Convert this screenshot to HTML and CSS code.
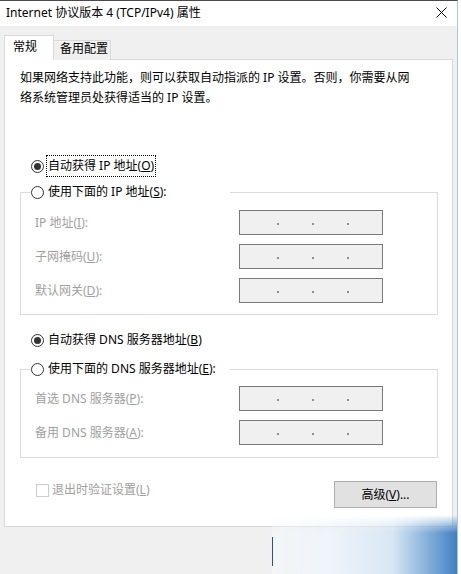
FILE: index.html
```html
<!DOCTYPE html>
<html lang="zh-CN">

<head>
    <meta charset="UTF-8">
    <meta name="viewport" content="width=device-width, initial-scale=1.0">
    <title>Internet 协议版本 4 (TCP/IPv4) 属性</title>
    <link rel="stylesheet" href="styles.css">
</head>

<body>
    <div class="window">
        <div class="titlebar">
            <span class="title">Internet 协议版本 4 (TCP/IPv4) 属性</span>
            <svg class="close" width="11" height="11" viewBox="0 0 11 11">
                <path d="M0.5 0.5 L10.5 10.5 M10.5 0.5 L0.5 10.5" stroke="#000" stroke-width="1" fill="none" />
            </svg>
        </div>

        <div class="client">
            <div class="tabs">
                <div class="tab active">常规</div>
                <div class="tab">备用配置</div>
            </div>

            <div class="panel">
                <p class="desc">如果网络支持此功能，则可以获取自动指派的 IP 设置。否则，你需要从网<br>络系统管理员处获得适当的 IP 设置。</p>

                <div class="radio-row first">
                    <span class="radio checked"></span>
                    <span class="radio-label focus">自动获得 IP 地址(<u>O</u>)</span>
                </div>

                <fieldset class="group">
                    <legend>
                        <span class="radio"></span>
                        <span class="radio-label">使用下面的 IP 地址(<u>S</u>):</span>
                    </legend>
                    <div class="field">
                        <span class="field-label">IP 地址(<u>I</u>):</span>
                        <span class="ipbox"><i></i><i></i><i></i></span>
                    </div>
                    <div class="field">
                        <span class="field-label">子网掩码(<u>U</u>):</span>
                        <span class="ipbox"><i></i><i></i><i></i></span>
                    </div>
                    <div class="field">
                        <span class="field-label">默认网关(<u>D</u>):</span>
                        <span class="ipbox"><i></i><i></i><i></i></span>
                    </div>
                </fieldset>

                <div class="radio-row dns">
                    <span class="radio checked"></span>
                    <span class="radio-label">自动获得 DNS 服务器地址(<u>B</u>)</span>
                </div>

                <fieldset class="group group-dns">
                    <legend>
                        <span class="radio"></span>
                        <span class="radio-label">使用下面的 DNS 服务器地址(<u>E</u>):</span>
                    </legend>
                    <div class="field">
                        <span class="field-label">首选 DNS 服务器(<u>P</u>):</span>
                        <span class="ipbox"><i></i><i></i><i></i></span>
                    </div>
                    <div class="field">
                        <span class="field-label">备用 DNS 服务器(<u>A</u>):</span>
                        <span class="ipbox"><i></i><i></i><i></i></span>
                    </div>
                </fieldset>

                <div class="footer">
                    <label class="check">
                        <span class="checkbox"></span>
                        <span class="check-label">退出时验证设置(<u>L</u>)</span>
                    </label>
                    <button class="btn">高级(<u>V</u>)...</button>
                </div>
            </div>
        </div>

        <div class="watermark"></div>
        <div class="caret"></div>
    </div>
</body>

</html>
```

FILE: styles.css
```css
html,
body {
    margin: 0;
    padding: 0;
}

:root {
    --face: #f0f0f0;
    --line: #d9d9d9;
    --disabled: #a0a0a0;
}

body {
    width: 461px;
    height: 574px;
    overflow: hidden;
    background: #fff;
    color: #000;
    font-family: "Noto Sans", "Noto Sans CJK SC", sans-serif;
    font-size: 12px;
    line-height: 20px;
}

.window {
    position: relative;
    width: 458px;
    height: 574px;
    box-sizing: border-box;
    border-top: 1px solid #4a4a4a;
    border-right: 1px solid #a9c6e4;
    background: var(--face);
}

.titlebar {
    height: 25px;
    box-sizing: border-box;
    display: flex;
    justify-content: space-between;
    align-items: flex-start;
    padding: 2px 10px 0 6px;
    background: #fff;
}

.titlebar .title {
    line-height: 20px;
}

.titlebar .close {
    margin-top: 4px;
}

.client {
    padding-top: 9px;
}

.tabs {
    display: flex;
    align-items: flex-end;
    margin: 0 0 -1px 4px;
}

.tab {
    height: 20px;
    box-sizing: border-box;
    width: 58px;
    margin-left: -1px;
    padding: 0 0 0 6px;
    line-height: 16px;
    border: 1px solid var(--line);
    border-bottom: none;
    background: var(--face);
}

.tab.active {
    position: relative;
    z-index: 1;
    height: 25px;
    width: 50px;
    margin-left: 0;
    padding: 3px 0 0 8px;
    background: #fff;
}

.panel {
    width: 449px;
    margin-left: 4px;
    box-sizing: border-box;
    padding: 8px 0 18px;
    border: 1px solid var(--line);
    background: #fff;
}

.desc {
    margin: 0;
    padding-left: 15px;
    line-height: 20px;
}

.radio-row {
    display: flex;
    align-items: center;
    height: 22px;
    padding-left: 26px;
}

.radio-row.first {
    margin-top: 47px;
}

.radio-row.dns {
    margin-top: 14px;
}

.radio {
    width: 13px;
    height: 13px;
    box-sizing: border-box;
    border: 1px solid #333;
    border-radius: 50%;
    background: #fff;
    display: flex;
    align-items: center;
    justify-content: center;
    flex: none;
}

.radio.checked::after {
    content: "";
    width: 7px;
    height: 7px;
    border-radius: 50%;
    background: #333;
}

.radio-label {
    margin-left: 2px;
    padding: 0 1px;
    border: 1px dotted transparent;
    line-height: 20px;
    white-space: nowrap;
}

.radio-label.focus {
    border-color: #000;
}

.group {
    width: 418px;
    min-width: 0;
    box-sizing: border-box;
    margin: 4px 0 0 15px;
    padding: 7px 0 11px;
    border: 1px solid #dcdcdc;
}

.group legend {
    display: flex;
    align-items: center;
    width: 199px;
    height: 22px;
    box-sizing: border-box;
    margin-left: 10px;
    padding: 0;
}

.group-dns {
    margin-top: 7px;
    padding: 6px 0 12px;
}

.field {
    display: flex;
    align-items: center;
    height: 25px;
}

.field + .field {
    margin-top: 9px;
}

.field-label {
    width: 218px;
    box-sizing: border-box;
    padding-left: 14px;
    color: var(--disabled);
}

.ipbox {
    width: 144px;
    height: 25px;
    box-sizing: border-box;
    display: flex;
    gap: 33px;
    padding: 3px 0 0 37px;
    align-items: center;
    border: 1px solid #7a7a7a;
    background: var(--face);
}

.ipbox i {
    width: 2px;
    height: 2px;
    background: #8c8c8c;
}

.footer {
    display: flex;
    justify-content: space-between;
    align-items: flex-start;
    margin-top: 23px;
    padding: 0 15px 0 31px;
}

.check {
    display: flex;
    align-items: center;
    height: 18px;
}

.checkbox {
    width: 13px;
    height: 13px;
    box-sizing: border-box;
    border: 1px solid #cccccc;
    background: #fff;
}

.check-label {
    margin-left: 3px;
    color: var(--disabled);
}

.btn {
    width: 103px;
    height: 27px;
    padding: 0;
    border: 1px solid #adadad;
    background: #e1e1e1;
    color: #000;
    font: inherit;
    line-height: 20px;
}

.watermark {
    position: absolute;
    left: 272px;
    top: 514px;
    width: 185px;
    height: 60px;
    background: linear-gradient(90deg, rgba(246, 249, 252, 0.5) 0%, rgba(238, 244, 250, 0.95) 30%, rgba(214, 229, 243, 0.95) 65%, #5b93cc 94%, #3f7fc0 100%);
    -webkit-mask-image: linear-gradient(180deg, transparent 0%, #000 30%);
    mask-image: linear-gradient(180deg, transparent 0%, #000 30%);
}

.caret {
    position: absolute;
    left: 272px;
    top: 536px;
    width: 1px;
    height: 29px;
    background: #2a5590;
}
```
